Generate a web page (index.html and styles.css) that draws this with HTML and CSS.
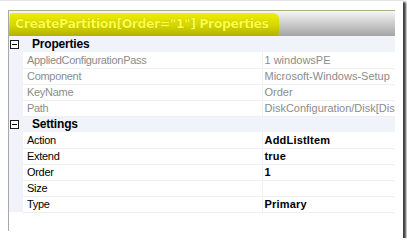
FILE: index.html
```html
<!DOCTYPE html>
<html lang="en">
<head>
    <meta charset="UTF-8">
    <title>CreatePartition Properties</title>
    <link rel="stylesheet" href="styles.css">
</head>
<body>
    <div class="frame">
        <div class="window">
            <div class="title-bar">
                <span class="highlight">CreatePartition[Order="1"] Properties</span>
            </div>

            <table class="grid">
                <colgroup>
                    <col class="col-gutter">
                    <col class="col-name">
                    <col>
                </colgroup>
                <tr class="category">
                    <td class="gutter"><span class="toggle"></span></td>
                    <td colspan="2">Properties</td>
                </tr>
                <tr class="readonly">
                    <td class="gutter"></td>
                    <td class="name">AppliedConfigurationPass</td>
                    <td class="value">1 windowsPE</td>
                </tr>
                <tr class="readonly">
                    <td class="gutter"></td>
                    <td class="name">Component</td>
                    <td class="value">Microsoft-Windows-Setup</td>
                </tr>
                <tr class="readonly">
                    <td class="gutter"></td>
                    <td class="name">KeyName</td>
                    <td class="value">Order</td>
                </tr>
                <tr class="readonly">
                    <td class="gutter"></td>
                    <td class="name">Path</td>
                    <td class="value">DiskConfiguration/Disk[DiskID="0"]</td>
                </tr>
                <tr class="category">
                    <td class="gutter"><span class="toggle"></span></td>
                    <td colspan="2">Settings</td>
                </tr>
                <tr>
                    <td class="gutter"></td>
                    <td class="name">Action</td>
                    <td class="value">AddListItem</td>
                </tr>
                <tr>
                    <td class="gutter"></td>
                    <td class="name">Extend</td>
                    <td class="value">true</td>
                </tr>
                <tr>
                    <td class="gutter"></td>
                    <td class="name">Order</td>
                    <td class="value">1</td>
                </tr>
                <tr>
                    <td class="gutter"></td>
                    <td class="name">Size</td>
                    <td class="value"></td>
                </tr>
                <tr>
                    <td class="gutter"></td>
                    <td class="name">Type</td>
                    <td class="value">Primary</td>
                </tr>
            </table>
        </div>
    </div>
</body>
</html>
```

FILE: styles.css
```css
:root {
    --frame-border: #a8a8a8;
    --grid-blue: #f0f4fa;
    --grid-line: #eef0f2;
    --readonly-text: #8c8c8c;
    --text-color: #000;
}

* {
    box-sizing: border-box;
    margin: 0;
    padding: 0;
}

body {
    background: #fff;
    font-family: 'Liberation Sans', Arial, sans-serif;
    color: var(--text-color);
}

.frame {
    width: 403px;
    height: 238px;
    padding: 9px 0 0 8px;
    background: #fff;
    border-top: 1px solid #e4e4e4;
    box-shadow: 3px 2px 2px rgba(0, 0, 0, 0.75);
}

.window {
    width: 387px;
    height: 221px;
    border-left: 1px solid var(--frame-border);
}

.title-bar {
    height: 26px;
    border-top: 1px solid #a3b285;
    background: linear-gradient(#f6f6f6, #a4a4a4);
    padding: 2px 0 0 1px;
}

.highlight {
    display: inline-block;
    height: 23px;
    padding: 3px 10px 0 5px;
    font-family: 'DejaVu Sans', sans-serif;
    font-size: 12.5px;
    font-weight: 700;
    letter-spacing: -0.45px;
    color: #ffff4a;
    background: linear-gradient(#eeee00, #d6d600 55%, #b0b000);
    border-radius: 2px 6px 3px 1px;
    text-shadow: 0 0 1px #9c9c00;
}

.grid {
    width: 386px;
    border-collapse: collapse;
    table-layout: fixed;
    font-size: 11px;
    letter-spacing: -0.3px;
}

.col-gutter {
    width: 14px;
}

.col-name {
    width: 239px;
}

.grid td {
    height: 16px;
    padding: 0;
    white-space: nowrap;
    overflow: hidden;
}

.grid .gutter {
    background: var(--grid-blue);
    padding-left: 1px;
}

.grid .name {
    padding-left: 4px;
    border-bottom: 1px solid var(--grid-line);
}

.grid .value {
    padding-left: 2px;
    letter-spacing: 0;
    border-left: 1px solid var(--grid-line);
    border-bottom: 1px solid var(--grid-line);
}

.category td {
    background: var(--grid-blue);
    font-weight: 700;
    font-size: 12px;
    letter-spacing: -0.2px;
    padding-left: 9px;
}

.toggle {
    display: block;
    position: relative;
    width: 9px;
    height: 9px;
    border: 1px solid #1a1a1a;
    background: #fff;
}

.toggle::after {
    content: "";
    position: absolute;
    left: 1px;
    top: 3px;
    width: 5px;
    height: 1px;
    background: #000;
}

.readonly td {
    color: var(--readonly-text);
}

tr:not(.readonly):not(.category) .value {
    font-weight: 700;
    letter-spacing: 0.2px;
}
```
